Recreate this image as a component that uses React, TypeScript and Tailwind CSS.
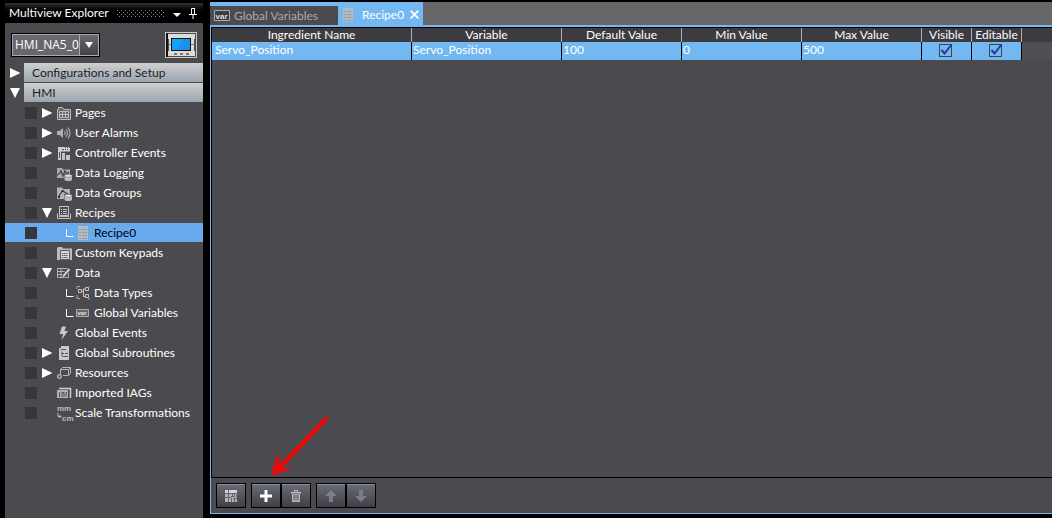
import { useState } from 'react'
import type { ReactNode } from 'react'

type IconName =
  | 'pages' | 'alarm' | 'events' | 'logging' | 'groups' | 'recipes' | 'recipe' | 'keypad' | 'data'
  | 'types' | 'var' | 'bolt' | 'subroutine' | 'resources' | 'iag' | 'scale'

type Item = { label: string; icon: IconName; arrow?: 'open' | 'closed'; child?: boolean }

const items: Item[] = [
  { label: 'Pages', icon: 'pages', arrow: 'closed' },
  { label: 'User Alarms', icon: 'alarm', arrow: 'closed' },
  { label: 'Controller Events', icon: 'events', arrow: 'closed' },
  { label: 'Data Logging', icon: 'logging' },
  { label: 'Data Groups', icon: 'groups' },
  { label: 'Recipes', icon: 'recipes', arrow: 'open' },
  { label: 'Recipe0', icon: 'recipe', child: true },
  { label: 'Custom Keypads', icon: 'keypad' },
  { label: 'Data', icon: 'data', arrow: 'open' },
  { label: 'Data Types', icon: 'types', child: true },
  { label: 'Global Variables', icon: 'var', child: true },
  { label: 'Global Events', icon: 'bolt' },
  { label: 'Global Subroutines', icon: 'subroutine', arrow: 'closed' },
  { label: 'Resources', icon: 'resources', arrow: 'closed' },
  { label: 'Imported IAGs', icon: 'iag' },
  { label: 'Scale Transformations', icon: 'scale' },
]

const columns = ['Ingredient Name', 'Variable', 'Default Value', 'Min Value', 'Max Value', 'Visible', 'Editable']

const disk = (
  <>
    <path d="M7 9h8.500v6.500H7z" fill="#4b4a4e" />
    <path d="M7.500 11v3.500c0 2 7.500 2 7.500 0V11z" fill="#bdbdbd" />
    <ellipse cx="11.250" cy="10.800" rx="3.700" ry="1.500" fill="#e2e2e2" stroke="#77767a" strokeWidth=".6" />
  </>
)

const glyphs: Record<IconName, ReactNode> = {
  pages: (
    <>
      <path d="M.5 14.500V4.500h1v-2h4l1 2h7v10z" fill="#66656a" stroke="#bdbdbd" />
      <path d="M2 6.500h10M2.500 6v7M5.500 6v7M8.500 6v7M11.500 6v7M2 9.500h10M2 12.500h10" fill="none" stroke="#bdbdbd" />
    </>
  ),
  alarm: (
    <>
      <path d="M0 6h2.500L6 3v10l-3.500-3H0z" fill="#b0b0b0" />
      <path d="M7.500 6q1.500 2 0 4M9 4q3 4 0 8M11 2.500q4 5.500 0 11" fill="none" stroke="#b5b5b5" strokeWidth="1.100" />
    </>
  ),
  events: (
    <>
      <path d="M1 2h12v4.500H4V15H1z" fill="#cfcfcf" />
      <path d="M2.500 7v6M5 4.500h2M8 4.500h1M10 4.500h1M8 2.500h1M10 2.500h1M12 2.500h1" stroke="#55545a" />
      <path d="M5 8h3v7H5zM9 10h4v5H9z" fill="#c4c4c4" />
    </>
  ),
  logging: (
    <>
      <path d="M0 3h5l1 1.500h7V13H0z" fill="#a9a9aa" />
      <path d="M0 10l2-1 2-3 2 5 2-5 2 3 2-2" fill="none" stroke="#454449" strokeWidth="1.300" />
      {disk}
    </>
  ),
  groups: (
    <>
      <path d="M0 2.500h5l1 1.500h7V14H0z" fill="#b4b4b4" />
      <path d="M1 12l4.500-6L11 9" fill="none" stroke="#37363a" strokeWidth="1.200" />
      <path d="M4.500 5h2v2h-2zM1 11h2v2H1z" fill="#2e2d31" />
      {disk}
    </>
  ),
  recipes: (
    <>
      <path d="M2.500 1.500h9v9h-9z" fill="#4b4a4e" stroke="#c9c9c9" />
      <path d="M4 4.500h1M6 4.500h4M4 6.500h1M6 6.500h4M4 8.500h1M6 8.500h4" stroke="#c9c9c9" />
      <path d="M.5 8.500v5h13v-5M2 11.500h10" fill="none" stroke="#c2c2c2" />
    </>
  ),
  recipe: (
    <>
      <path d="M1 1h10v14H1z" fill="#b9b9b9" />
      <path d="M2 4.500h2M2 7.500h2M2 10.500h2M2 13.500h2M5 4.500h5M5 7.500h5M5 10.500h5M5 13.500h5" stroke="#7da4cc" />
    </>
  ),
  keypad: (
    <>
      <path d="M0 15V3l1-1h4l1 1.500h9V15z" fill="#bcbcbc" />
      <path d="M3.500 5.500h9v9h-9z" fill="#dadada" stroke="#59585c" />
      <path d="M5 8.500h6M5 10.500h6M5 12.500h6" stroke="#55545a" strokeDasharray="1.500 .5" />
    </>
  ),
  data: (
    <>
      <path d="M.5 3.500h11v9H.5zM0 6.500h11M0 9.500h10M4 3v10" fill="none" stroke="#b5b5b5" />
      <path d="M6 11.500L12.500 4" stroke="#4b4a4e" strokeWidth="4" />
      <path d="M6 11.500L12.500 4" stroke="#d0d0d0" strokeWidth="2" />
    </>
  ),
  types: (
    <>
      <path d="M1.500 4.500h3v3h-3zM8.500 2.500h3v3h-3zM8.500 9.500h3v3h-3zM5 6h2M6.500 4v8M6 4h2M6 11.500h2" fill="none" stroke="#c4c4c4" />
      <path d="M0 4V1.500h3M0 10v3.500h3M11 14h2M12 1.500h1" fill="none" stroke="#a6a6a6" />
    </>
  ),
  var: (
    <>
      <path d="M-.5 4.500h12v7h-12z" fill="#66656a" stroke="#a9a9a9" />
      <text x=".5" y="10" fontSize="6" fontFamily="Liberation Sans, sans-serif" fontWeight="bold" fill="#e4e4e4">var</text>
    </>
  ),
  bolt: <path d="M5 1.500h4L7.500 6H11L4.500 15 6 9H2.500z" fill="#c8c8c8" />,
  subroutine: (
    <>
      <path d="M2 3h2V1h8v14H2z" fill="#c9c9c9" />
      <path d="M4 4.500h5M5 6.500v5M5 8.500h2M8 8.500h3M6 11.500h5" fill="none" stroke="#56555a" />
    </>
  ),
  resources: (
    <>
      <path d="M3.500 9.500V4.500l2-2h8v6l-2 2H6M11.500 10V4.500h-8M11.500 4.500l2-2" fill="none" stroke="#b9b9b9" />
      <circle cx="2.500" cy="11.500" r="1.800" fill="none" stroke="#bdbdbd" strokeWidth="1.300" />
    </>
  ),
  iag: (
    <>
      <path d="M0 5h11v8H0z" fill="#b2b2b2" />
      <path d="M2 3.500h11.500V13" fill="none" stroke="#d2d2d2" strokeWidth="1.500" />
      <path d="M2.500 7v5M5 12V7.500h2V12M10 7.500H9V11h1" fill="none" stroke="#4d4c50" />
    </>
  ),
  scale: (
    <g fontFamily="Liberation Sans, sans-serif" fontWeight="bold" fill="#bdbdbd">
      <text x="0" y="6" fontSize="8">mm</text>
      <text x="5" y="16" fontSize="8">cm</text>
      <path d="M1 8v3.500h3M2.500 10L4 11.500 2.500 13" fill="none" stroke="#bdbdbd" />
    </g>
  ),
}

function Icon({ name }: { name: IconName }) {
  return <svg className="size-4 shrink-0 overflow-visible" viewBox="0 0 16 16" aria-hidden="true">{glyphs[name]}</svg>
}

function Triangle({ open }: { open: boolean }) {
  return (
    <svg className="size-3 shrink-0" viewBox="0 0 12 12" aria-hidden="true">
      <path d={open ? 'M0 1h10L5 11z' : 'M0 1l10.500 5L0 11z'} fill="white" />
    </svg>
  )
}

function TreeItem({ item, selected, onSelect }: { item: Item; selected: boolean; onSelect: () => void }) {
  return (
    <li className={`flex items-center h-5 pl-5 border-b border-[#4b4a4e] ${selected ? 'bg-[#68aaee] text-black' : 'text-white'}`}>
      <input type="checkbox" aria-label={`Mark ${item.label}`} className="appearance-none size-3 shrink-0 bg-[#37363b]" />
      <button onClick={onSelect} className={`flex items-center text-left whitespace-nowrap ${item.child ? 'pl-7' : 'pl-1'}`}>
        {item.child ? (
          <svg className="w-3 h-4 shrink-0" viewBox="0 0 12 16" aria-hidden="true">
            <path d="M1.500 4v7.500h7" fill="none" stroke="white" />
          </svg>
        ) : (
          <span className="flex w-4 pl-px shrink-0">{item.arrow && <Triangle open={item.arrow === 'open'} />}</span>
        )}
        <Icon name={item.icon} />
        <span className={item.child ? 'pl-px' : 'pl-0.5'}>{item.label}</span>
      </button>
    </li>
  )
}

function Explorer() {
  const [selected, setSelected] = useState('Recipe0')
  const barCls = 'flex-1 h-full pl-2 text-left text-[#1c1c22] bg-linear-to-b from-[#cfcfcf] to-[#9ba5b0]'

  return (
    <aside className="w-[198px] shrink-0 mt-px bg-[#4b4a4e]">
      <header className="flex items-center h-5 pl-1 pr-1.5 gap-2 text-white bg-linear-to-b from-[#333] to-black to-50%">
        <h2 className="whitespace-nowrap">Multiview Explorer</h2>
        <svg className="flex-1 h-2" aria-hidden="true">
          <pattern id="grip" width="4" height="4" patternUnits="userSpaceOnUse">
            <path d="M0 1h1v1H0zM2 3h1v1H2z" fill="#8a8a8a" />
          </pattern>
          <rect width="100%" height="8" fill="url(#grip)" />
        </svg>
        <button aria-label="Window options">
          <svg className="w-2 h-3" viewBox="0 0 8 12"><path d="M0 6h8L4 10z" fill="white" /></svg>
        </button>
        <button aria-label="Pin">
          <svg className="w-2 h-3" viewBox="0 0 8 12">
            <path d="M2.500 7V1.500h3V7M0 7.500h8M4 8v4" fill="none" stroke="white" />
            <path d="M5 1h1v6H5z" fill="white" />
          </svg>
        </button>
      </header>

      <div className="flex items-center justify-between h-10 px-1.5 pt-1">
        <div className="grid w-[89px] h-6 border border-black">
          <select
            aria-label="Device"
            className="col-start-1 row-start-1 appearance-none pl-0.5 text-white border border-[#aaa] bg-[#66676f] font-['Open_Sans','Noto_Sans',sans-serif]"
          >
            <option>HMI_NA5_0</option>
          </select>
          <span className="col-start-1 row-start-1 justify-self-end flex items-center justify-center w-5 border border-[#aaa] bg-linear-to-b from-[#686972] to-[#414249] pointer-events-none">
            <svg className="w-2 h-2" viewBox="0 0 8 8" aria-hidden="true"><path d="M0 1h8L4 7z" fill="white" /></svg>
          </span>
        </div>
        <button aria-label="Show device">
          <svg className="w-8 h-[26px]" viewBox="0 0 32 26">
            <path d="M0 0h32v26H0z" fill="#c9c9c9" />
            <path d="M1 1h30v24H1z" fill="#4c4d54" />
            <path d="M1 1h2v24H1z" fill="#111" />
            <path d="M3 2h27v22H3z" fill="#dcdcda" />
            <path d="M3 7h1v12H3zM29 7h1v12h-1z" fill="#4c4d54" />
            <path d="M3 12.500h4" stroke="#666" />
            <path d="M26 12.500h4" stroke="#3a9a58" />
            <path d="M6 6h20v13H6z" fill="#111" />
            <path d="M7 7h18v11H7z" fill="#12a2fa" />
            <path d="M19 7h6v11H12z" fill="#1b90ea" />
            <path d="M9 21h3v2H9zM15 21h3v2h-3zM21 21h3v2h-3z" fill="#77777a" />
          </svg>
        </button>
      </div>

      <div className="flex flex-col gap-px">
        <div className="flex items-center h-[19px] pl-1">
          <span className="flex w-[15px] pl-px shrink-0"><Triangle open={false} /></span>
          <button className={barCls}>Configurations and Setup</button>
        </div>
        <div className="flex items-center h-[19px] pl-1">
          <span className="flex w-[15px] pl-px shrink-0"><Triangle open /></span>
          <button className={barCls}>HMI</button>
        </div>
      </div>
      <ul className="mt-px">
        {items.map(item => (
          <TreeItem key={item.label} item={item} selected={selected === item.label} onSelect={() => setSelected(item.label)} />
        ))}
      </ul>
    </aside>
  )
}

function CheckCell({ label }: { label: string }) {
  const [checked, setChecked] = useState(true)
  return (
    <td className="border-r border-black p-0 pr-0.5 pb-0.5">
      <div className="grid place-items-center">
        <input
          type="checkbox"
          aria-label={label}
          checked={checked}
          onChange={e => setChecked(e.target.checked)}
          className="col-start-1 row-start-1 appearance-none size-[13px] border border-[#444]"
        />
        {checked && (
          <svg className="col-start-1 row-start-1 size-[13px] overflow-visible pointer-events-none" viewBox="0 0 13 13" aria-hidden="true">
            <path d="M2.500 6l3 3.500L12.500.5" fill="none" stroke="#24389a" strokeWidth="2" />
          </svg>
        )}
      </div>
    </td>
  )
}

function RecipeTable() {
  const row = ['Servo_Position', 'Servo_Position', '100', '0', '500']
  return (
    <table className="w-full table-fixed border-separate border-spacing-0 leading-[14px]">
      <colgroup>
        <col className="w-[200px]" />
        <col className="w-[150px]" />
        <col className="w-[120px]" />
        <col className="w-[120px]" />
        <col className="w-[120px]" />
        <col className="w-[50px]" />
        <col className="w-[50px]" />
        <col />
      </colgroup>
      <thead>
        <tr className="h-[14px] bg-[#3c3b40]">
          {columns.map(c => (
            <th key={c} scope="col" className="p-0 font-normal whitespace-nowrap border-r border-[#b0b0b0]">{c}</th>
          ))}
          <td className="p-0" />
        </tr>
      </thead>
      <tbody>
        <tr className="h-[18px] bg-[#74b8f2]">
          {row.map((v, i) => (
            <td key={i} className="px-px pt-px pb-0 align-top border-r border-black first:pl-[3px]">{v}</td>
          ))}
          <CheckCell label="Visible" />
          <CheckCell label="Editable" />
          <td className="p-0 bg-[#504f53]" />
        </tr>
      </tbody>
    </table>
  )
}

function ToolButton({ label, children }: { label: string; children: ReactNode }) {
  return (
    <button
      aria-label={label}
      className="flex items-center justify-center w-[30px] h-[25px] border border-black bg-linear-to-b from-[#696b76] to-[#3f4048] inset-shadow-[0_1px_0_#8f9097]"
    >
      <svg className="size-4" viewBox="0 0 16 16" aria-hidden="true">{children}</svg>
    </button>
  )
}

function Toolbar() {
  return (
    <footer className="flex items-center gap-[5px] h-9 px-[5px] border-t border-black">
      <ToolButton label="Recipe data">
        <path d="M2 2h12v12H2z" fill="#b4b4b6" />
        <path d="M2 2h12v3H2z" fill="#d6d6d6" />
        <path d="M2 5.500h12M5.500 2v12M9.500 5v3M2 9.500h6M11.500 5v4M8 8.500h3M8.500 10v4M10 10.500h4M11.500 11v3M13.500 7v2" fill="none" stroke="#62636c" />
      </ToolButton>
      <div className="relative flex">
        <ToolButton label="Add">
          <path d="M6.500 2h3v4.500H14v3H9.500V14h-3V9.500H2v-3h4.500z" fill="white" />
        </ToolButton>
        <ToolButton label="Delete">
          <path d="M3 4h10v1.500H3zM6 2h4v2H9V3H7v1H6z" fill="#bbb" />
          <path d="M4 6h8v8H4z" fill="#b5b5b5" />
          <path d="M6 6.500v6M8 6.500v6M10 6.500v6" stroke="#56575f" />
        </ToolButton>
        <svg className="absolute left-5 bottom-8 w-[60px] h-[62px] pointer-events-none" viewBox="0 0 60 62" aria-hidden="true">
          <path d="M55 5L9 53" stroke="#ee0808" strokeWidth="4.500" strokeLinecap="round" />
          <path d="M1 61L6 42h1.500l.5 9 4 4 6-1 .5 1z" fill="#ee0808" stroke="#ee0808" strokeLinejoin="round" />
        </svg>
      </div>
      <div className="flex">
        <ToolButton label="Move up"><path d="M8 2l6 6h-4v6H6V8H2z" fill="#7c7d85" /></ToolButton>
        <ToolButton label="Move down"><path d="M8 14l6-6h-4V2H6v6H2z" fill="#7c7d85" /></ToolButton>
      </div>
    </footer>
  )
}

function Editor() {
  return (
    <main className="flex flex-1 min-w-0 flex-col mb-1 text-white">
      <nav className="flex h-[23px] bg-[#666568]">
        <button className="flex items-center w-32 gap-1 pl-1 border-t-4 border-[#74b8f2] bg-[#4b4a4e] text-[#a9a9ad] whitespace-nowrap">
          <svg className="w-4 h-3 shrink-0" viewBox="0 0 16 12" aria-hidden="true">
            <path d="M.5.5h15v10H.5z" fill="#3c3b40" stroke="#aaa" />
            <text x="1.500" y="8.500" fontSize="8" fontFamily="Liberation Sans, sans-serif" fontWeight="bold" fill="#ddd">var</text>
          </svg>
          Global Variables
        </button>
        <div className="flex items-center gap-1 pt-0.5 pl-1 pr-1 bg-[#74b8f2] whitespace-nowrap">
          <Icon name="recipe" />
          <button>Recipe0</button>
          <button aria-label="Close Recipe0" className="pl-0.5">
            <svg className="w-[9px] h-[9px]" viewBox="0 0 8 8"><path d="M.5.5l7 7M7.500.5l-7 7" stroke="white" strokeWidth="1.500" /></svg>
          </button>
        </div>
      </nav>
      <div className="flex flex-1 flex-col border-t-2 border-l border-b border-[#74b8f2] bg-[#4b4a4e]">
        <div className="flex-1 border-t border-l border-black">
          <RecipeTable />
        </div>
        <Toolbar />
      </div>
    </main>
  )
}

export default function App() {
  return (
    <div className="flex min-h-screen gap-[7px] pl-[5px] pt-0.5 bg-black text-[12px] leading-4 font-['Lato','Open_Sans',sans-serif]">
      <Explorer />
      <Editor />
    </div>
  )
}
